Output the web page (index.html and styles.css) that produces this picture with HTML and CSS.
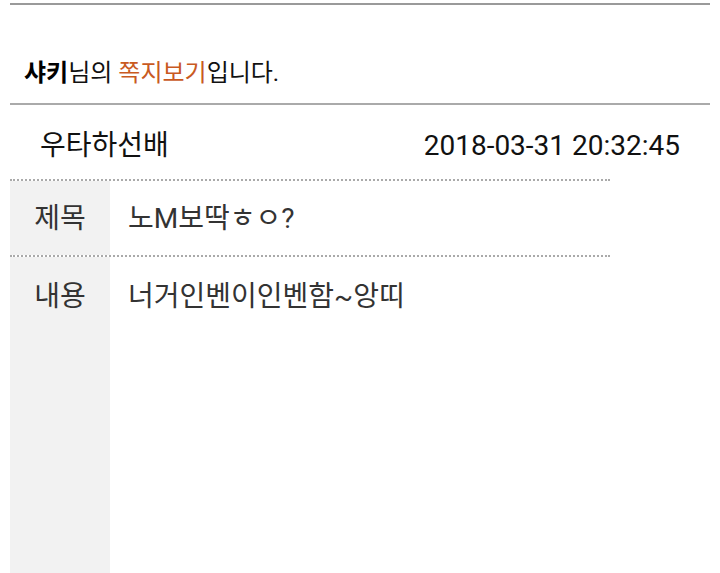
FILE: index.html
```html
<!DOCTYPE html>
<html lang="ko">
<head>
  <meta charset="UTF-8" />
  <title>쪽지보기</title>
  <link rel="stylesheet" href="styles.css">
</head>
<body>

<div class="memo">
  <!-- Title -->
  <h2 class="memo-title"><strong>샤키</strong>님의 <span class="accent">쪽지보기</span>입니다.</h2>

  <!-- Sender / date -->
  <div class="memo-head">
    <span class="sender">우타하선배</span>
    <span class="date">2018-03-31 20:32:45</span>
  </div>

  <!-- Fields -->
  <div class="memo-fields">
    <div class="field">
      <div class="label">제목</div>
      <div class="value">노M보딱ㅎㅇ?</div>
    </div>
    <div class="field body">
      <div class="label">내용</div>
      <div class="value">너거인벤이인벤함~앙띠</div>
    </div>
  </div>
</div>

</body>
</html>
```

FILE: styles.css
```css
body {
  margin: 0;
  background: #fff;
  color: #222;
  font-family: Roboto, "Noto Sans CJK KR", sans-serif;
}

.memo {
  margin: 3px 10px 0;
  border-top: 2px solid #9a9a9a;
}

.memo-title {
  margin: 0;
  padding: 52px 14px 14px;
  font-size: 24px;
  font-weight: normal;
  line-height: 32px;
  color: #111;
  border-bottom: 2px solid #aaa;
}

.memo-title strong {
  font-weight: bold;
  color: #000;
}

.memo-title .accent {
  color: #c95a1f;
}

.memo-head {
  display: flex;
  justify-content: space-between;
  padding: 24px 30px 16px;
  font-size: 28px;
  line-height: 34px;
  color: #111;
}

.memo-fields {
  width: 600px;
  border-top: 2px dotted #aaa;
}

.field {
  display: flex;
  font-size: 28px;
  line-height: 34px;
  color: #333;
}

.field + .field {
  border-top: 2px dotted #aaa;
}

.field .label {
  width: 100px;
  flex-shrink: 0;
  padding: 21px 0 19px;
  text-align: center;
  background: #f2f2f2;
}

.field .value {
  padding: 21px 18px 19px;
}

.field.body .label,
.field.body .value {
  padding-top: 23px;
  min-height: 320px;
}
```
